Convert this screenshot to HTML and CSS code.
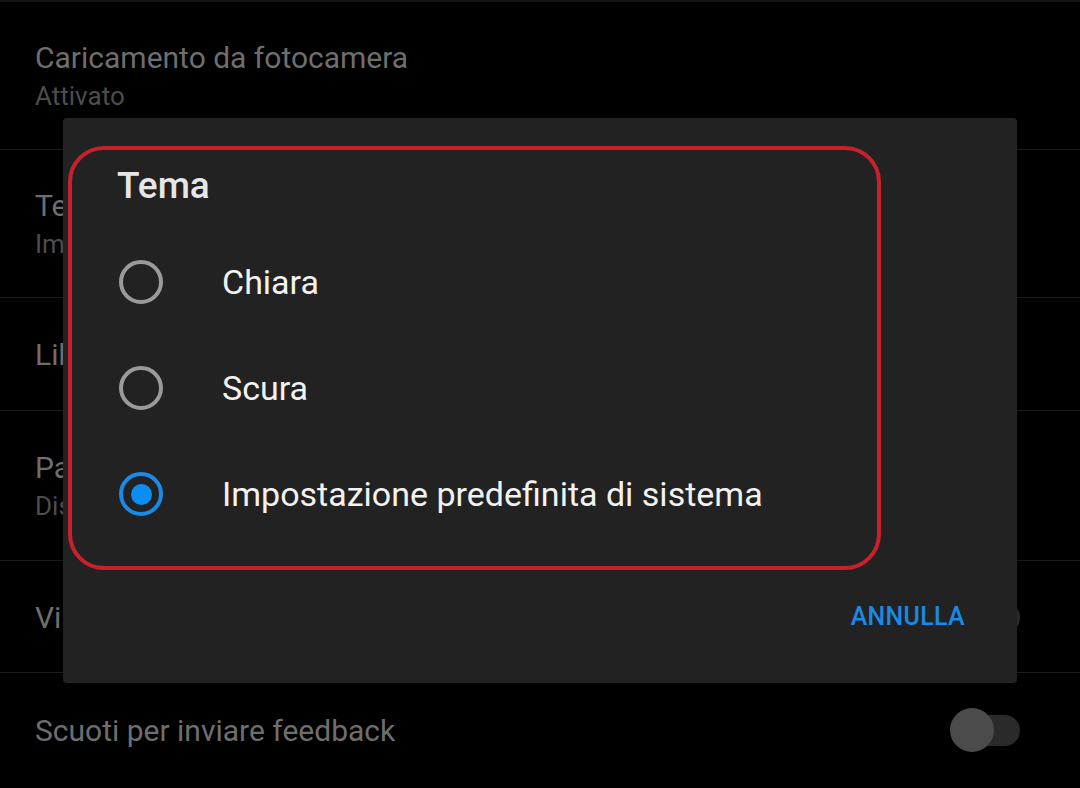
FILE: index.html
```html
<!DOCTYPE html>
<html lang="it">
<head>
    <meta charset="UTF-8">
    <meta name="viewport" content="width=device-width, initial-scale=1.0">
    <title>Impostazioni</title>
    <link rel="stylesheet" href="styles.css">
</head>
<body>
<div class="settings">
    <div class="row two-line">
        <p class="row-title">Caricamento da fotocamera</p>
        <p class="row-sub">Attivato</p>
    </div>
    <div class="row two-line">
        <p class="row-title">Tema</p>
        <p class="row-sub">Impostazione predefinita di sistema</p>
    </div>
    <div class="row">
        <p class="row-title">Libreria foto</p>
    </div>
    <div class="row two-line tall">
        <p class="row-title">Passcode</p>
        <p class="row-sub">Disattivato</p>
    </div>
    <div class="row switch-row short">
        <p class="row-title">Visualizza anteprime</p>
        <span class="switch"><span class="thumb"></span></span>
    </div>
    <div class="row switch-row last">
        <p class="row-title">Scuoti per inviare feedback</p>
        <span class="switch"><span class="thumb"></span></span>
    </div>
</div>

<div class="dialog">
    <div class="highlight">
        <h2 class="dialog-title">Tema</h2>
        <ul class="options">
            <li class="option">
                <span class="radio"></span>
                <span class="option-label">Chiara</span>
            </li>
            <li class="option">
                <span class="radio"></span>
                <span class="option-label">Scura</span>
            </li>
            <li class="option">
                <span class="radio checked"></span>
                <span class="option-label">Impostazione predefinita di sistema</span>
            </li>
        </ul>
    </div>
    <div class="dialog-actions">
        <button class="text-button">ANNULLA</button>
    </div>
</div>
</body>
</html>
```

FILE: styles.css
```css
* {
    box-sizing: border-box;
    margin: 0;
    padding: 0;
}
body {
    font-family: Roboto, "Noto Sans", "Liberation Sans", sans-serif;
    background-color: #000;
    width: 1080px;
    height: 788px;
    overflow: hidden;
    position: relative;
}
.settings {
    border-top: 2px solid #151515;
}
.row {
    display: flex;
    flex-direction: column;
    justify-content: center;
    height: 113px;
    padding-left: 35px;
    padding-top: 2px;
    border-bottom: 1px solid #1b1b1b;
}
.row.two-line {
    height: 148px;
    padding-top: 2px;
}
.row.tall {
    height: 150px;
}
.row.short {
    height: 112px;
}
.row.last {
    height: 115px;
    padding-top: 0;
    border-bottom: none;
}
.row-title {
    font-size: 30px;
    line-height: 38px;
    color: #6e6e6e;
}
.row-sub {
    font-size: 26px;
    line-height: 38px;
    color: #4d4d4d;
}
.switch-row {
    flex-direction: row;
    align-items: center;
    justify-content: space-between;
    padding-right: 60px;
}
.switch {
    position: relative;
    width: 62px;
    height: 31px;
    border-radius: 16px;
    background-color: #2a2a2a;
}
.switch .thumb {
    position: absolute;
    left: -8px;
    top: -7px;
    width: 44px;
    height: 44px;
    border-radius: 50%;
    background-color: #4b4b4b;
}

/* dialog over the list */
.dialog {
    position: absolute;
    left: 63px;
    top: 118px;
    width: 954px;
    height: 565px;
    background-color: #222;
    border-radius: 4px;
    padding-top: 28px;
    padding-left: 5px;
}
.highlight {
    width: 813px;
    height: 424px;
    border: 4px solid #c9212b;
    border-radius: 36px;
    padding: 11px 0 0 45px;
}
.dialog-title {
    font-size: 37px;
    font-weight: 500;
    line-height: 50px;
    color: #e6e6e6;
}
.options {
    list-style: none;
    margin-top: 18px;
}
.option {
    display: flex;
    align-items: center;
    height: 106px;
    padding-left: 2px;
}
.radio {
    width: 44px;
    height: 44px;
    border-radius: 50%;
    border: 4px solid #9a9a9a;
    display: flex;
    align-items: center;
    justify-content: center;
    flex-shrink: 0;
}
.radio.checked {
    border-color: #1a8ae6;
}
.radio.checked::after {
    content: "";
    width: 21px;
    height: 21px;
    border-radius: 50%;
    background-color: #0b8ef4;
}
.option-label {
    margin-left: 59px;
    font-size: 34px;
    color: #f2f2f2;
}
.dialog-actions {
    display: flex;
    justify-content: flex-end;
    padding: 29px 52px 0 0;
}
.text-button {
    background: none;
    border: none;
    font-family: Roboto, "Noto Sans", sans-serif;
    font-size: 25px;
    font-weight: 500;
    line-height: 36px;
    letter-spacing: 0.3px;
    color: #1a8ae6;
}
```
